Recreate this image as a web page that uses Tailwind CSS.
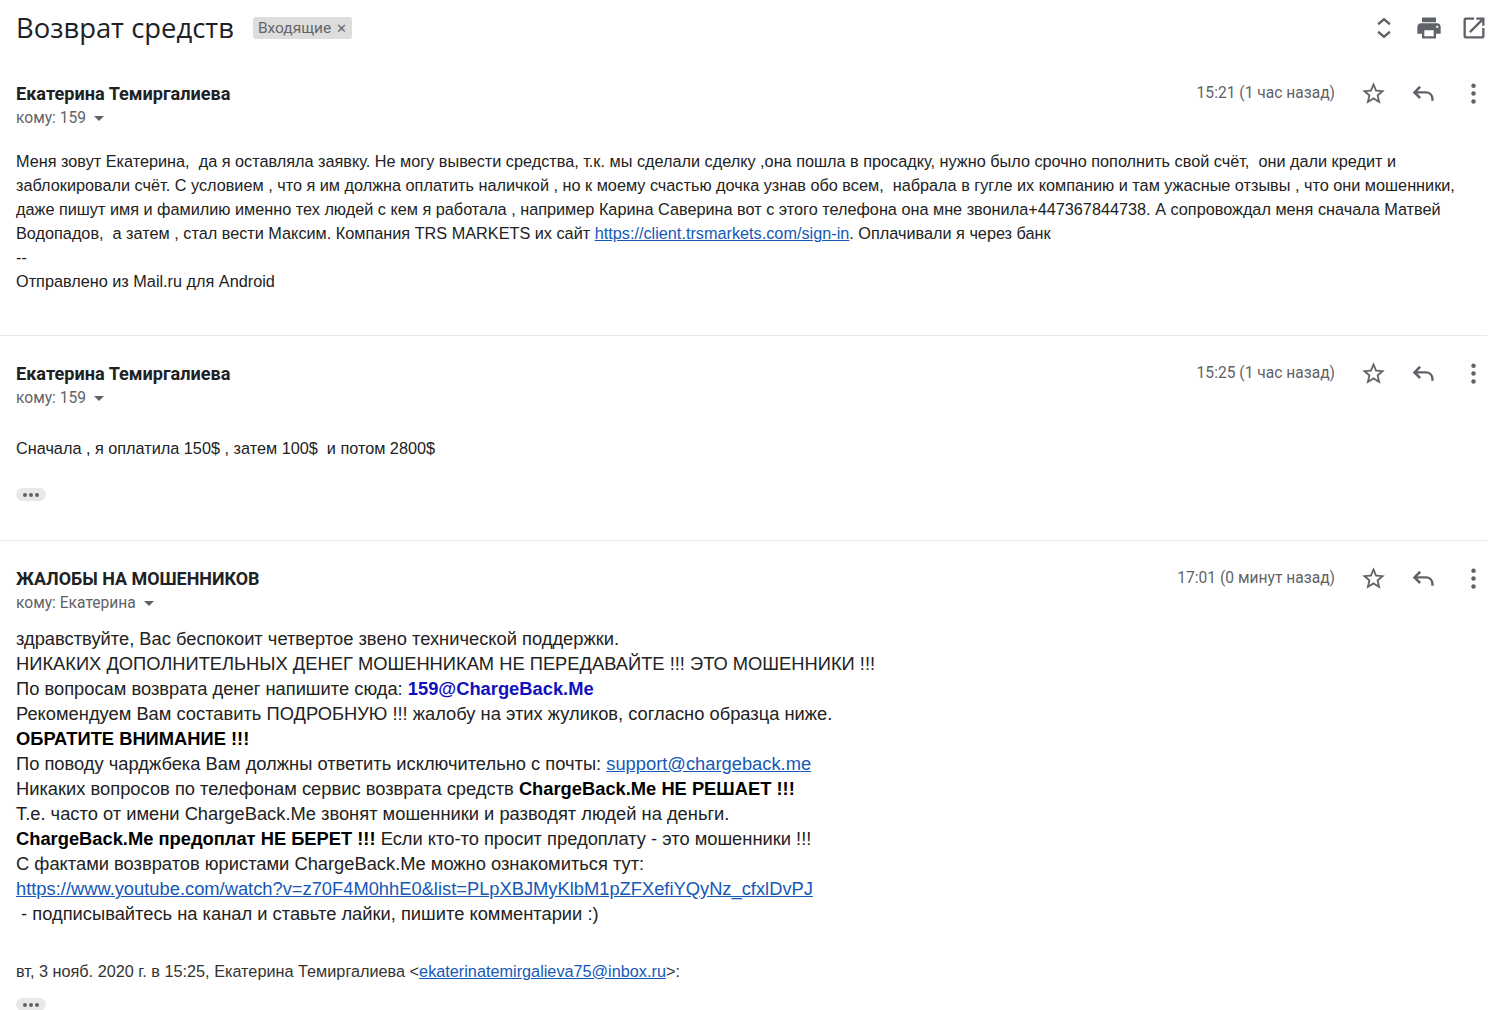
<!DOCTYPE html>
<html lang="ru">
<head>
    <meta charset="UTF-8">
    <title>Возврат средств</title>
    <script src="https://cdn.jsdelivr.net/npm/@tailwindcss/browser@4"></script>
</head>
<body class="bg-white text-[#222] font-['Liberation_Sans',sans-serif] overflow-hidden h-[1010px]">

    <!-- Subject bar -->
    <header class="h-[56px] pl-4 pr-[15px] flex items-center">
        <h1 class="font-['Open_Sans',sans-serif] text-[27.400px] leading-none text-[#202124]">Возврат средств</h1>
        <span class="ml-[19px] h-[22px] px-[5px] flex items-center gap-[5px] rounded-[3px] bg-[#dddddd] text-[#666] text-[15.500px] font-['Roboto',sans-serif]"><span class="relative top-px">Входящие</span> <span class="text-[13px] leading-none">✕</span></span>
        <div class="ml-auto flex items-center text-[#5f6368]">
            <svg class="w-[26px] h-[26px] mr-[18px]" viewBox="0 0 24 24" fill="none" stroke="currentColor" stroke-width="2.2"><path d="M6.500 8.500 12 4l5.500 4.500M6.500 15.500 12 20l5.500-4.500"/></svg>
            <svg class="w-[28px] h-[28px] mr-[17px]" viewBox="0 0 24 24" fill="currentColor"><path d="M19 8H5c-1.660 0-3 1.340-3 3v6h4v4h12v-4h4v-6c0-1.660-1.340-3-3-3zm-3 11H8v-5h8v5zm3-7c-.550 0-1-.450-1-1s.450-1 1-1 1 .450 1 1-.450 1-1 1zm-1-9H6v4h12V3z"/></svg>
            <svg class="w-[28px] h-[28px]" viewBox="0 0 24 24" fill="currentColor"><path d="M19 19H5V5h7V3H5a2 2 0 0 0-2 2v14a2 2 0 0 0 2 2h14c1.100 0 2-.900 2-2v-7h-2v7zM14 3v2h3.590l-9.830 9.830 1.410 1.410L19 6.410V10h2V3h-7z"/></svg>
        </div>
    </header>

    <!-- Message 1 -->
    <section class="border-b border-[#e8e8e8] h-[280px] pl-4 mr-[16px]">
        <div class="flex justify-between pt-[25px] h-[95px]">
            <div>
                <div class="font-['Roboto',sans-serif] font-bold text-[18.100px] leading-[25px] text-[#202124]">Екатерина Темиргалиева</div>
                <div class="flex items-center gap-[8px] font-['Roboto',sans-serif] text-[15.600px] leading-[24px] text-[#5f6368]">кому: 159 <span class="w-0 h-0 border-x-[5px] border-x-transparent border-t-[5px] border-t-[#5f6368]"></span></div>
            </div>
            <div class="flex items-start">
                <span class="font-['Roboto',sans-serif] text-[15.600px] leading-[25px] text-[#5f6368] mr-[25px]">15:21 (1 час назад)</span>
                <div class="flex items-center gap-[23px] -mt-[1px] text-[#5f6368]">
                    <svg class="w-[27px] h-[27px]" viewBox="0 0 24 24" fill="currentColor"><path d="M22 9.240l-7.190-.620L12 2 9.190 8.630 2 9.240l5.460 4.730L5.820 21 12 17.270 18.180 21l-1.630-7.030L22 9.240zM12 15.400l-3.760 2.270 1-4.280-3.320-2.880 4.380-.380L12 6.100l1.710 4.040 4.380.380-3.320 2.880 1 4.280L12 15.400z"/></svg>
                    <svg class="w-[27px] h-[27px]" viewBox="0 0 24 24" fill="none" stroke="currentColor" stroke-width="2.200"><path d="M9 6 4 11l5 5M4 11h10c3.500 0 6 2.500 6 6v1.500"/></svg>
                    <svg class="w-[27px] h-[27px]" viewBox="0 0 24 24" fill="currentColor"><circle cx="12" cy="5" r="2"/><circle cx="12" cy="12" r="2"/><circle cx="12" cy="19" r="2"/></svg>
                </div>
            </div>
        </div>
        <div class="text-[16.250px] leading-[24px] text-[#222] -mt-[2px] whitespace-pre-wrap">Меня зовут Екатерина,  да я оставляла заявку. Не могу вывести средства, т.к. мы сделали сделку ,она пошла в просадку, нужно было срочно пополнить свой счёт,  они дали кредит и
заблокировали счёт. С условием , что я им должна оплатить наличкой , но к моему счастью дочка узнав обо всем,  набрала в гугле их компанию и там ужасные отзывы , что они мошенники,
даже пишут имя и фамилию именно тех людей с кем я работала , например Карина Саверина вот с этого телефона она мне звонила+447367844738. А сопровождал меня сначала Матвей
Водопадов,  а затем , стал вести Максим. Компания TRS MARKETS их сайт <a href="#" class="text-[#1558b8] underline">https://client.trsmarkets.com/sign-in</a>. Оплачивали я через банк
--
Отправлено из Mail.ru для Android</div>
    </section>

    <!-- Message 2 -->
    <section class="border-b border-[#e8e8e8] h-[205px] pl-4 mr-[16px]">
        <div class="flex justify-between pt-[25px] h-[102px]">
            <div>
                <div class="font-['Roboto',sans-serif] font-bold text-[18.100px] leading-[25px] text-[#202124]">Екатерина Темиргалиева</div>
                <div class="flex items-center gap-[8px] font-['Roboto',sans-serif] text-[15.600px] leading-[24px] text-[#5f6368]">кому: 159 <span class="w-0 h-0 border-x-[5px] border-x-transparent border-t-[5px] border-t-[#5f6368]"></span></div>
            </div>
            <div class="flex items-start">
                <span class="font-['Roboto',sans-serif] text-[15.600px] leading-[25px] text-[#5f6368] mr-[25px]">15:25 (1 час назад)</span>
                <div class="flex items-center gap-[23px] -mt-[1px] text-[#5f6368]">
                    <svg class="w-[27px] h-[27px]" viewBox="0 0 24 24" fill="currentColor"><path d="M22 9.240l-7.190-.620L12 2 9.190 8.630 2 9.240l5.460 4.730L5.820 21 12 17.270 18.180 21l-1.630-7.030L22 9.240zM12 15.400l-3.760 2.270 1-4.280-3.320-2.880 4.380-.380L12 6.100l1.710 4.040 4.380.380-3.320 2.880 1 4.280L12 15.400z"/></svg>
                    <svg class="w-[27px] h-[27px]" viewBox="0 0 24 24" fill="none" stroke="currentColor" stroke-width="2.200"><path d="M9 6 4 11l5 5M4 11h10c3.500 0 6 2.500 6 6v1.500"/></svg>
                    <svg class="w-[27px] h-[27px]" viewBox="0 0 24 24" fill="currentColor"><circle cx="12" cy="5" r="2"/><circle cx="12" cy="12" r="2"/><circle cx="12" cy="19" r="2"/></svg>
                </div>
            </div>
        </div>
        <div class="text-[16.250px] leading-[24px] text-[#222] -mt-[2px] whitespace-pre-wrap">Сначала , я оплатила 150$ , затем 100$  и потом 2800$</div>
        <div class="mt-[28px] w-[30px] h-[13px] rounded-full bg-[#e8e8e8] flex items-center justify-center gap-[2px]">
            <span class="w-[4px] h-[4px] rounded-full bg-[#5f6368]"></span><span class="w-[4px] h-[4px] rounded-full bg-[#5f6368]"></span><span class="w-[4px] h-[4px] rounded-full bg-[#5f6368]"></span>
        </div>
    </section>

    <!-- Message 3 -->
    <section class="pl-4 mr-[16px]">
        <div class="flex justify-between pt-[25px] h-[85px]">
            <div>
                <div class="font-['Roboto',sans-serif] font-bold text-[17.900px] leading-[25px] text-[#202124]">ЖАЛОБЫ НА МОШЕННИКОВ</div>
                <div class="flex items-center gap-[8px] font-['Roboto',sans-serif] text-[15.600px] leading-[24px] text-[#5f6368]">кому: Екатерина <span class="w-0 h-0 border-x-[5px] border-x-transparent border-t-[5px] border-t-[#5f6368]"></span></div>
            </div>
            <div class="flex items-start">
                <span class="font-['Roboto',sans-serif] text-[15.600px] leading-[25px] text-[#5f6368] mr-[25px]">17:01 (0 минут назад)</span>
                <div class="flex items-center gap-[23px] -mt-[1px] text-[#5f6368]">
                    <svg class="w-[27px] h-[27px]" viewBox="0 0 24 24" fill="currentColor"><path d="M22 9.240l-7.190-.620L12 2 9.190 8.630 2 9.240l5.460 4.730L5.820 21 12 17.270 18.180 21l-1.630-7.030L22 9.240zM12 15.400l-3.760 2.270 1-4.280-3.320-2.880 4.380-.380L12 6.100l1.710 4.040 4.380.380-3.320 2.880 1 4.280L12 15.400z"/></svg>
                    <svg class="w-[27px] h-[27px]" viewBox="0 0 24 24" fill="none" stroke="currentColor" stroke-width="2.200"><path d="M9 6 4 11l5 5M4 11h10c3.500 0 6 2.500 6 6v1.500"/></svg>
                    <svg class="w-[27px] h-[27px]" viewBox="0 0 24 24" fill="currentColor"><circle cx="12" cy="5" r="2"/><circle cx="12" cy="12" r="2"/><circle cx="12" cy="19" r="2"/></svg>
                </div>
            </div>
        </div>
        <div class="text-[18.320px] leading-[25px] text-[#222] whitespace-pre-wrap">здравствуйте, Вас беспокоит четвертое звено технической поддержки.
НИКАКИХ ДОПОЛНИТЕЛЬНЫХ ДЕНЕГ МОШЕННИКАМ НЕ ПЕРЕДАВАЙТЕ !!! ЭТО МОШЕННИКИ !!!
По вопросам возврата денег напишите сюда: <b class="text-[#1010c0]">159@ChargeBack.Me</b>
Рекомендуем Вам составить ПОДРОБНУЮ !!! жалобу на этих жуликов, согласно образца ниже.
<b class="text-black">ОБРАТИТЕ ВНИМАНИЕ !!!</b>
По поводу чарджбека Вам должны ответить исключительно с почты: <a href="#" class="text-[#1558b8] underline">support@chargeback.me</a>
Никаких вопросов по телефонам сервис возврата средств <b class="text-black">ChargeBack.Me НЕ РЕШАЕТ !!!</b>
Т.е. часто от имени ChargeBack.Me звонят мошенники и разводят людей на деньги.
<b class="text-black">ChargeBack.Me предоплат НЕ БЕРЕТ !!!</b> Если кто-то просит предоплату - это мошенники !!!
С фактами возвратов юристами ChargeBack.Me можно ознакомиться тут:
<a href="#" class="text-[#1558b8] underline">https://www.youtube.com/watch?v=z70F4M0hhE0&amp;list=PLpXBJMyKlbM1pZFXefiYQyNz_cfxlDvPJ</a>
 - подписывайтесь на канал и ставьте лайки, пишите комментарии :)</div>
        <div class="mt-[33px] text-[16.250px] leading-[24px] text-[#333]">вт, 3 нояб. 2020 г. в 15:25, Екатерина Темиргалиева &lt;<a href="#" class="text-[#1558b8] underline">ekaterinatemirgalieva75@inbox.ru</a>&gt;:</div>
        <div class="mt-[15px] w-[30px] h-[13px] rounded-full bg-[#e8e8e8] flex items-center justify-center gap-[2px]">
            <span class="w-[4px] h-[4px] rounded-full bg-[#5f6368]"></span><span class="w-[4px] h-[4px] rounded-full bg-[#5f6368]"></span><span class="w-[4px] h-[4px] rounded-full bg-[#5f6368]"></span>
        </div>
    </section>

</body>
</html>
